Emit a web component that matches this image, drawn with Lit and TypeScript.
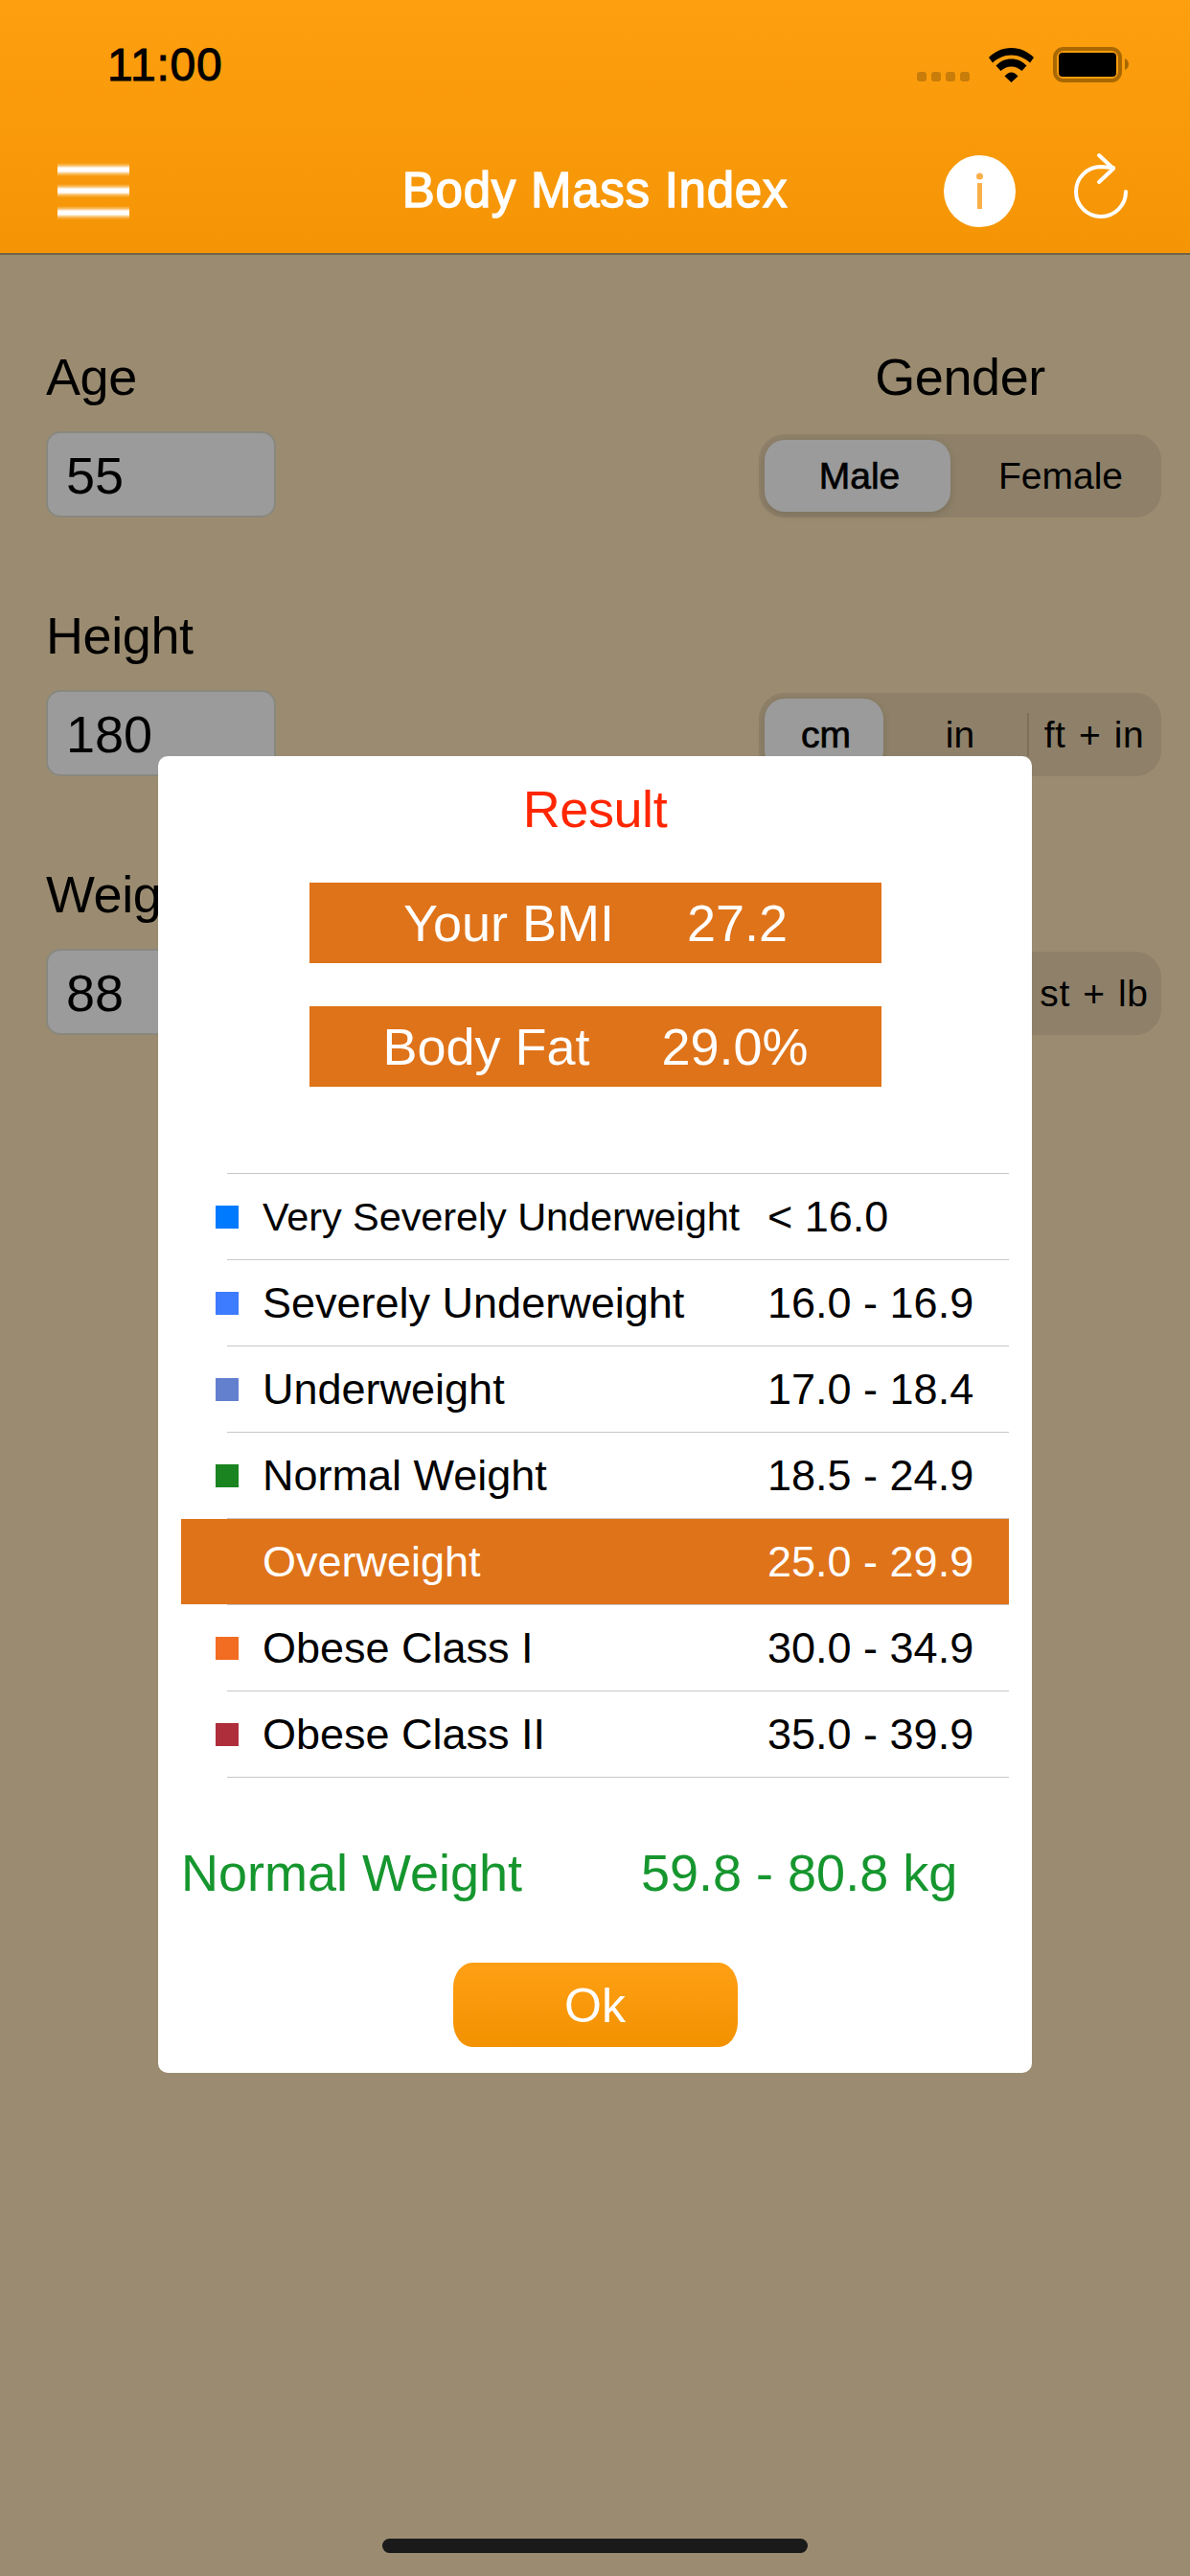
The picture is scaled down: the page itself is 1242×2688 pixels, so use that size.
import { LitElement, html, css, nothing } from "lit";
import { customElement } from "lit/decorators.js";

const RANGES: { name: string; range: string; color: string | null; on?: boolean; fit?: boolean }[] = [
  { name: "Very Severely Underweight", range: "< 16.0", color: "#007aff", fit: true },
  { name: "Severely Underweight", range: "16.0 - 16.9", color: "#3d7bff" },
  { name: "Underweight", range: "17.0 - 18.4", color: "#6380cf" },
  { name: "Normal Weight", range: "18.5 - 24.9", color: "#1a8420" },
  { name: "Overweight", range: "25.0 - 29.9", color: null, on: true },
  { name: "Obese Class I", range: "30.0 - 34.9", color: "#f26c21" },
  { name: "Obese Class II", range: "35.0 - 39.9", color: "#ae2e3c" },
];

const FORM = [
  { label: "Age", value: "55", head: "Gender", opts: ["Male", "Female"] },
  { label: "Height", value: "180", head: "", opts: ["cm", "in", "ft + in"] },
  { label: "Weight", value: "88", head: "", opts: ["kg", "lb", "st + lb"] },
];

@customElement("app-root")
export class AppRoot extends LitElement {
  static styles = css`
    :host {
      display: block;
      position: relative;
      width: 1242px;
      height: 2688px;
      overflow: hidden;
      background: #9b8c71;
      font-family: "Liberation Sans", Arial, sans-serif;
      color: #000;
    }
    .nav {
      background: linear-gradient(#fd9f0f, #f59505);
      border-bottom: 2px solid #6e6449;
    }
    .status {
      height: 134px;
      display: flex;
      align-items: center;
      justify-content: space-between;
      padding: 0 64px 0 112px;
    }
    .time {
      font-size: 48px;
      -webkit-text-stroke: 1px #000;
      letter-spacing: 0.8px;
      line-height: 56px;
      margin-top: 2px;
    }
    .sys {
      display: flex;
      align-items: flex-end;
      gap: 20px;
      height: 37px;
    }
    .dots {
      display: flex;
      gap: 5px;
      padding-bottom: 1px;
    }
    .dots span {
      width: 10px;
      height: 10px;
      border-radius: 3px;
      background: rgba(0, 0, 0, 0.2);
    }
    .sys svg {
      display: block;
    }
    .bar {
      height: 130px;
      display: grid;
      grid-template-columns: 1fr auto 1fr;
      align-items: center;
      padding: 0 64px 0 60px;
    }
    .burger {
      display: flex;
      flex-direction: column;
      gap: 8.5px;
      width: 75px;
    }
    .burger span {
      height: 14px;
      background: linear-gradient(
        transparent,
        rgba(255, 255, 255, 0.35) 18%,
        #fff 38%,
        #fff 62%,
        rgba(255, 255, 255, 0.35) 82%,
        transparent
      );
    }
    .title {
      font-size: 51px;
      letter-spacing: 0.75px;
      -webkit-text-stroke: 1.4px #fff;
      color: #fff;
      line-height: 60px;
      white-space: nowrap;
      margin-left: 4px;
    }
    .actions {
      display: flex;
      justify-content: flex-end;
      align-items: center;
      gap: 60px;
    }
    .info {
      filter: blur(0.5px);
    }
    .refresh {
      margin-bottom: 8px;
    }
    .form {
      padding: 96px 30px 0 48px;
      display: flex;
      flex-direction: column;
      gap: 92px;
    }
    .row {
      display: flex;
      justify-content: space-between;
      align-items: flex-end;
    }
    .col {
      display: flex;
      flex-direction: column;
      gap: 26px;
    }
    .label {
      font-size: 54px;
      line-height: 62px;
      letter-spacing: -0.4px;
    }
    .input {
      width: 240px;
      height: 90px;
      box-sizing: border-box;
      background: #9b9b9b;
      border: 2px solid #89887f;
      border-radius: 15px;
      padding-left: 19px;
      font-size: 54px;
      line-height: 88px;
    }
    .right {
      width: 420px;
    }
    .head {
      text-align: center;
      font-size: 54px;
      line-height: 62px;
      letter-spacing: -0.4px;
      margin-bottom: 29px;
    }
    .seg {
      display: flex;
      height: 87px;
      border-radius: 27px;
      background: #8e8069;
    }
    .cell {
      flex: 1;
      display: flex;
      align-items: center;
      justify-content: center;
      position: relative;
      font-size: 39px;
      white-space: nowrap;
    }
    .cell.on {
      -webkit-text-stroke: 0.7px #000;
    }
    .cell.on::before {
      content: "";
      position: absolute;
      inset: 6px 10px 6px 6px;
      border-radius: 21px;
      background: #9b9b9b;
      box-shadow: 0 3px 8px rgba(0, 0, 0, 0.12);
    }
    .cell span {
      position: relative;
    }
    .cell.div {
      letter-spacing: 0.6px;
      word-spacing: 2px;
    }
    .cell.div::after {
      content: "";
      position: absolute;
      left: 0;
      top: 21px;
      bottom: 21px;
      width: 2px;
      background: #7c705b;
    }
    .modal {
      position: absolute;
      left: 165px;
      top: 789px;
      width: 912px;
      height: 1374px;
      box-sizing: border-box;
      padding: 24px 24px 0;
      background: #fff;
      border-radius: 10px;
      display: flex;
      flex-direction: column;
    }
    .result {
      text-align: center;
      font-size: 54px;
      line-height: 62px;
      letter-spacing: -0.4px;
      color: #ff2600;
      margin-bottom: 46px;
    }
    .banner {
      align-self: center;
      width: 597px;
      height: 84px;
      background: #df7319;
      color: #fff;
      font-size: 54px;
      line-height: 84px;
      display: flex;
      justify-content: center;
      gap: 76px;
      white-space: nowrap;
      margin-left: 1px;
    }
    .banner + .banner {
      margin-top: 45px;
      gap: 75px;
    }
    .table {
      margin-top: 90px;
    }
    .rule {
      height: 1px;
      margin-left: 48px;
      background: #c8c8c8;
    }
    .range {
      height: 89px;
      display: grid;
      grid-template-columns: 24px 552px 1fr;
      align-items: center;
      padding-left: 36px;
      font-size: 45px;
    }
    .range.on {
      background: #df7319;
      color: #fff;
    }
    .sq {
      width: 24px;
      height: 24px;
    }
    .name {
      padding-left: 25px;
      white-space: nowrap;
    }
    .name.fit {
      font-size: 41.5px;
      letter-spacing: -0.1px;
    }
    .val {
      white-space: nowrap;
    }
    .normal {
      margin-top: 68px;
      display: grid;
      grid-template-columns: 480px 1fr;
      font-size: 54px;
      line-height: 62px;
      color: #16962e;
      white-space: nowrap;
    }
    .ok {
      align-self: center;
      margin-top: 63px;
      width: 297px;
      height: 88px;
      border-radius: 20px / 26px;
      background: linear-gradient(#ff9f14, #f29200);
      color: #fff;
      font-size: 50px;
      line-height: 90px;
      text-align: center;
    }
    .home {
      position: absolute;
      left: 399px;
      top: 2649px;
      width: 444px;
      height: 15px;
      border-radius: 8px;
      background: #1a1a1a;
    }
  `;

  render() {
    return html`
      <div class="nav">
        <div class="status">
          <div class="time">11:00</div>
          <div class="sys">
            <div class="dots"><span></span><span></span><span></span><span></span></div>
            <svg width="47" height="36" viewBox="0 0 47 36">
              <path d="M0 10C6 4 14 0 23.5 0C33 0 41 4 47 10L43 15.500C38 11 31 7.500 23.5 7.500C16 7.500 9 11 4 15.500Z" />
              <path d="M7.500 18.500C12 14 17 11.500 23.500 11.500C30 11.500 35 14 39.500 18.500L34.500 24C31.500 21.500 28 19.500 23.500 19.500C19 19.500 15.500 21.500 12.500 24Z" />
              <path d="M16.500 29.500C19 27 21 25.500 23.500 25.500C26 25.500 28 27 30.500 29.500L23.500 36Z" />
            </svg>
            <svg width="79" height="37" viewBox="0 0 79 37">
              <rect x="2" y="2" width="68" height="33" rx="9" fill="none" stroke="#a86800" stroke-width="4" />
              <rect x="6" y="6" width="60" height="25" rx="4" fill="#000" />
              <path d="M75 12C77.5 13 79 15.500 79 18C79 20.500 77.500 23 75 24Z" fill="#a86800" />
            </svg>
          </div>
        </div>
        <div class="bar">
          <div class="burger"><span></span><span></span><span></span></div>
          <div class="title">Body Mass Index</div>
          <div class="actions">
            <svg class="info" width="75" height="75" viewBox="0 0 75 75">
              <circle cx="37.5" cy="37.5" r="37.5" fill="#fff" />
              <circle cx="37.5" cy="22" r="3.5" fill="#fab04a" />
              <rect x="35" y="29" width="5" height="27" fill="#fab04a" />
            </svg>
            <svg class="refresh" width="58" height="80" viewBox="0 0 58 80" fill="none" stroke="#fff" stroke-width="4" stroke-linecap="round" stroke-linejoin="round">
              <path d="M55 45A26 26 0 1 1 29 19L42 20" />
              <path d="M27 7L42 21L27 35" />
            </svg>
          </div>
        </div>
      </div>

      <div class="form">
        ${FORM.map(
          (f) => html`
            <div class="row">
              <div class="col">
                <div class="label">${f.label}</div>
                <div class="input">${f.value}</div>
              </div>
              <div class="right">
                ${f.head ? html`<div class="head">${f.head}</div>` : nothing}
                <div class="seg">
                  ${f.opts.map(
                    (o, i) => html`
                      <div class="cell ${i === 0 ? "on" : ""} ${i === 2 ? "div" : ""}">
                        <span>${o}</span>
                      </div>
                    `
                  )}
                </div>
              </div>
            </div>
          `
        )}
      </div>

      <div class="modal">
        <div class="result">Result</div>
        <div class="banner"><span>Your BMI</span><span>27.2</span></div>
        <div class="banner"><span>Body Fat</span><span>29.0%</span></div>
        <div class="table">
          <div class="rule"></div>
          ${RANGES.map(
            (r) => html`
              <div class="range ${r.on ? "on" : ""}">
                ${r.color
                  ? html`<div class="sq" style="background:${r.color}"></div>`
                  : html`<div></div>`}
                <div class="name ${r.fit ? "fit" : ""}">${r.name}</div>
                <div class="val">${r.range}</div>
              </div>
              <div class="rule"></div>
            `
          )}
        </div>
        <div class="normal"><span>Normal Weight</span><span>59.8 - 80.8 kg</span></div>
        <div class="ok">Ok</div>
      </div>

      <div class="home"></div>
    `;
  }
}
